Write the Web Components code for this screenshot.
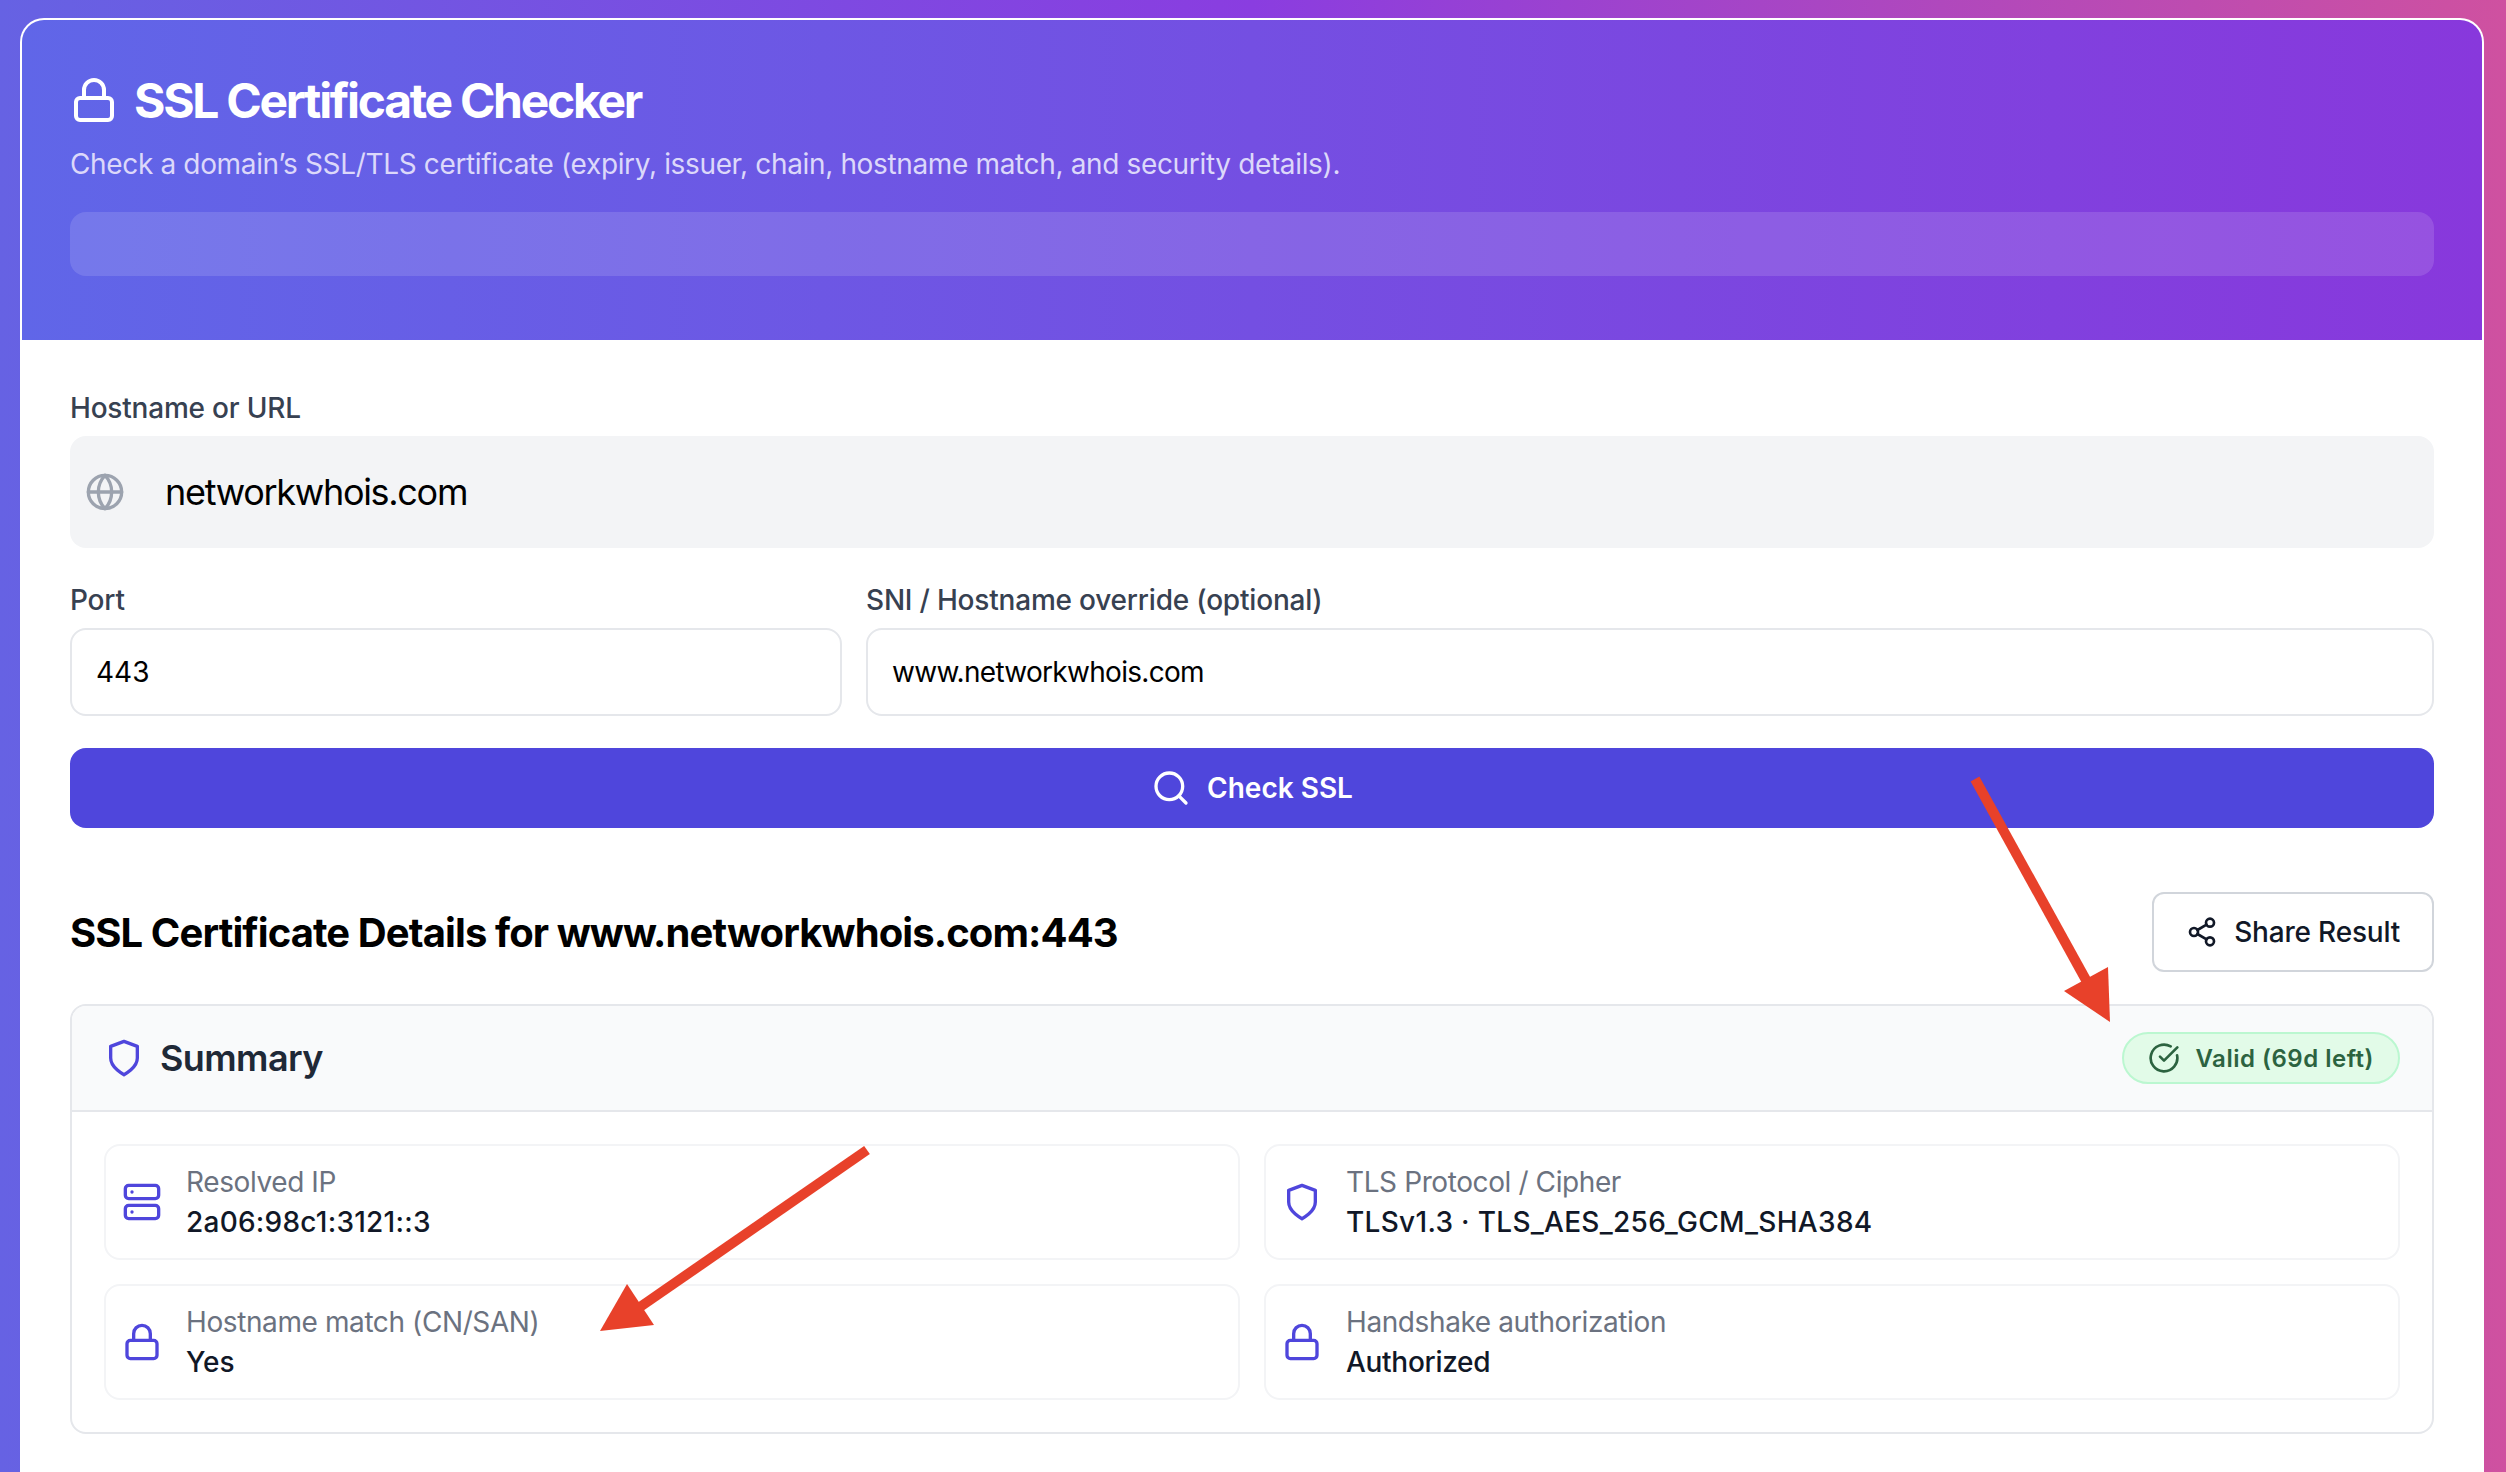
<!DOCTYPE html>
<html lang="en">
<head>
<meta charset="utf-8">
<title>SSL Certificate Checker</title>
<style>
    html, body { margin: 0; height: 100%; }
    body {
        position: relative;
        overflow: hidden;
        font-family: Inter, "Liberation Sans", sans-serif;
        background: linear-gradient(90deg, #6662e3 0%, #8a3de0 50%, #cf51a0 100%);
    }
</style>
</head>
<body>
<ssl-page>
    <ssl-header slot="header"
        heading="SSL Certificate Checker"
        subtitle="Check a domain’s SSL/TLS certificate (expiry, issuer, chain, hostname match, and security details)."></ssl-header>
    <form-field label="Hostname or URL">
        <text-box variant="large" icon="globe">networkwhois.com</text-box>
    </form-field>
    <field-row>
        <form-field label="Port"><text-box>443</text-box></form-field>
        <form-field label="SNI / Hostname override (optional)"><text-box style="letter-spacing: -0.7px">www.networkwhois.com</text-box></form-field>
    </field-row>
    <check-button icon="search">Check SSL</check-button>
    <result-heading>
        SSL Certificate Details for www.networkwhois.com:443
        <share-button slot="action" icon="share">Share Result</share-button>
    </result-heading>
    <summary-panel heading="Summary">
        <status-badge slot="status" icon="check">Valid (69d left)</status-badge>
        <info-tile icon="server" label="Resolved IP" style="--value-spacing: 0.25px">2a06:98c1:3121::3</info-tile>
        <info-tile icon="shield" label="TLS Protocol / Cipher" style="--value-spacing: 0.3px">TLSv1.3 · TLS_AES_256_GCM_SHA384</info-tile>
        <info-tile icon="lock" label="Hostname match (CN/SAN)">Yes</info-tile>
        <info-tile icon="lock" label="Handshake authorization" style="--value-spacing: -0.3px">Authorized</info-tile>
    </summary-panel>
</ssl-page>
<arrow-overlay></arrow-overlay>

<script>
const ICONS = {
    lock: '<rect x="3" y="11" width="18" height="11" rx="2"/><path d="M7 11V7a5 5 0 0 1 10 0v4"/>',
    globe: '<circle cx="12" cy="12" r="10"/><path d="M12 2a14.5 14.5 0 0 0 0 20 14.5 14.5 0 0 0 0-20"/><path d="M2 12h20"/>',
    search: '<circle cx="11" cy="11" r="8"/><path d="m21 21-4.3-4.3"/>',
    share: '<circle cx="18" cy="5" r="3"/><circle cx="6" cy="12" r="3"/><circle cx="18" cy="19" r="3"/><path d="m8.59 13.51 6.83 3.98"/><path d="m15.41 6.51-6.82 3.98"/>',
    shield: '<path d="M12 22s8-4 8-10V5l-8-3-8 3v7c0 6 8 10 8 10"/>',
    check: '<path d="M21.801 10A10 10 0 1 1 17 3.335"/><path d="m9 11 3 3L22 4"/>',
    server: '<rect x="2" y="2" width="20" height="8" rx="2"/><rect x="2" y="14" width="20" height="8" rx="2"/><path d="M6 6h.01"/><path d="M6 18h.01"/>'
};

class UiIcon extends HTMLElement {
    connectedCallback() {
        const size = this.getAttribute('size') || 40;
        this.attachShadow({ mode: 'open' });
        this.shadowRoot.innerHTML = `
            <style>
                :host { display: block; flex: none; width: ${size}px; height: ${size}px; }
                svg { display: block; width: 100%; height: 100%; }
            </style>
            <svg viewBox="0 0 24 24" fill="none" stroke="currentColor" stroke-width="2"
                stroke-linecap="round" stroke-linejoin="round">${ICONS[this.getAttribute('name')] || ''}</svg>
        `;
    }
}

class SslPage extends HTMLElement {
    connectedCallback() {
        this.attachShadow({ mode: 'open' });
        this.shadowRoot.innerHTML = `
            <style>
                :host { display: block; padding: 18px 22px 0 20px; height: 100%; box-sizing: border-box; }
                .card {
                    background: white;
                    border: 2px solid rgba(255, 255, 255, 0.85);
                    border-bottom: none;
                    border-radius: 24px 24px 0 0;
                    overflow: hidden;
                    height: 100%;
                    box-sizing: border-box;
                }
                .body {
                    display: flex;
                    flex-direction: column;
                    padding: 48px 48px 0;
                }
            </style>
            <div class="card">
                <slot name="header"></slot>
                <div class="body"><slot></slot></div>
            </div>
        `;
    }
}

class SslHeader extends HTMLElement {
    connectedCallback() {
        this.attachShadow({ mode: 'open' });
        this.shadowRoot.innerHTML = `
            <style>
                :host {
                    display: block;
                    height: 320px;
                    box-sizing: border-box;
                    padding: 48px 48px 0;
                    color: white;
                    background: linear-gradient(90deg, #6066e8, #8838dc);
                }
                .title { display: flex; align-items: center; gap: 16px; height: 64px; }
                h1 { margin: 0; font-size: 48px; line-height: 64px; font-weight: 700; letter-spacing: -2.3px; position: relative; top: 1px; }
                p { margin: 12px 0 0; font-size: 28px; line-height: 40px; letter-spacing: -0.35px; color: #dcd8fa; }
                .bar { margin-top: 28px; height: 64px; border-radius: 16px; background: rgba(255, 255, 255, 0.13); }
            </style>
            <div class="title">
                <ui-icon name="lock" size="48"></ui-icon>
                <h1>${this.getAttribute('heading')}</h1>
            </div>
            <p>${this.getAttribute('subtitle')}</p>
            <div class="bar"></div>
        `;
    }
}

class FormField extends HTMLElement {
    connectedCallback() {
        this.attachShadow({ mode: 'open' });
        this.shadowRoot.innerHTML = `
            <style>
                :host { display: block; min-width: 0; }
                label { display: block; margin-bottom: 8px; font-size: 28px; line-height: 40px; font-weight: 500; letter-spacing: -0.2px; color: #374151; }
            </style>
            <label>${this.getAttribute('label')}</label>
            <slot></slot>
        `;
    }
}

class FieldRow extends HTMLElement {
    connectedCallback() {
        this.attachShadow({ mode: 'open' });
        this.shadowRoot.innerHTML = `
            <style>
                :host { display: grid; grid-template-columns: 772px 1fr; gap: 24px; margin-top: 32px; }
            </style>
            <slot></slot>
        `;
    }
}

class TextBox extends HTMLElement {
    connectedCallback() {
        const large = this.getAttribute('variant') === 'large';
        const icon = this.getAttribute('icon');
        this.attachShadow({ mode: 'open' });
        this.shadowRoot.innerHTML = `
            <style>
                :host {
                    display: flex;
                    align-items: center;
                    box-sizing: border-box;
                    color: black;
                    height: ${large ? 112 : 88}px;
                    font-size: ${large ? 36 : 28}px;
                    ${large ? 'letter-spacing: -1.3px;' : ''}
                    padding-left: ${large ? 15 : 24}px;
                    gap: 40px;
                    border-radius: 16px;
                    background: ${large ? '#f3f4f6' : 'white'};
                    border: ${large ? 'none' : '2px solid #e5e7eb'};
                }
                ui-icon { color: #9ca3af; }
            </style>
            ${icon ? `<ui-icon name="${icon}"></ui-icon>` : ''}
            <slot></slot>
        `;
    }
}

class CheckButton extends HTMLElement {
    connectedCallback() {
        this.attachShadow({ mode: 'open' });
        this.shadowRoot.innerHTML = `
            <style>
                :host {
                    display: flex;
                    align-items: center;
                    justify-content: center;
                    gap: 16px;
                    height: 80px;
                    margin-top: 32px;
                    border-radius: 16px;
                    background: #4f46dc;
                    color: white;
                    font-size: 28px;
                    font-weight: 600;
                }
            </style>
            <ui-icon name="${this.getAttribute('icon')}"></ui-icon>
            <slot></slot>
        `;
    }
}

class ResultHeading extends HTMLElement {
    connectedCallback() {
        this.attachShadow({ mode: 'open' });
        this.shadowRoot.innerHTML = `
            <style>
                :host {
                    display: flex;
                    align-items: center;
                    justify-content: space-between;
                    margin-top: 64px;
                    color: black;
                    font-size: 40px;
                    font-weight: 700;
                    letter-spacing: -0.9px;
                }
            </style>
            <slot></slot>
            <slot name="action"></slot>
        `;
    }
}

class ShareButton extends HTMLElement {
    connectedCallback() {
        this.attachShadow({ mode: 'open' });
        this.shadowRoot.innerHTML = `
            <style>
                :host {
                    display: flex;
                    align-items: center;
                    gap: 16px;
                    box-sizing: border-box;
                    height: 80px;
                    padding: 0 32px;
                    border: 2px solid #d1d5db;
                    border-radius: 12px;
                    background: white;
                    color: #111827;
                    font-size: 28px;
                    font-weight: 500;
                    letter-spacing: -0.2px;
                }
            </style>
            <ui-icon name="${this.getAttribute('icon')}" size="32"></ui-icon>
            <slot></slot>
        `;
    }
}

class SummaryPanel extends HTMLElement {
    connectedCallback() {
        this.attachShadow({ mode: 'open' });
        this.shadowRoot.innerHTML = `
            <style>
                :host {
                    display: block;
                    margin-top: 32px;
                    border: 2px solid #e5e7eb;
                    border-radius: 16px;
                    overflow: hidden;
                }
                header {
                    display: flex;
                    align-items: center;
                    justify-content: space-between;
                    height: 106px;
                    box-sizing: border-box;
                    padding: 0 32px;
                    background: #f9fafb;
                    border-bottom: 2px solid #e5e7eb;
                }
                .name { display: flex; align-items: center; gap: 16px; color: #4f46dc; }
                h2 { margin: 0; font-size: 36px; font-weight: 600; letter-spacing: -0.6px; color: #1f2937; }
                .grid { display: grid; grid-template-columns: 1fr 1fr; gap: 24px; padding: 32px; }
            </style>
            <header>
                <div class="name">
                    <ui-icon name="shield"></ui-icon>
                    <h2>${this.getAttribute('heading')}</h2>
                </div>
                <slot name="status"></slot>
            </header>
            <div class="grid"><slot></slot></div>
        `;
    }
}

class StatusBadge extends HTMLElement {
    connectedCallback() {
        this.attachShadow({ mode: 'open' });
        this.shadowRoot.innerHTML = `
            <style>
                :host {
                    display: flex;
                    align-items: center;
                    gap: 16px;
                    height: 52px;
                    box-sizing: border-box;
                    padding: 0 24px;
                    border: 2px solid #bbf7d0;
                    border-radius: 26px;
                    background: #e2fbe8;
                    color: #2c6340;
                    font-size: 24px;
                    font-weight: 600;
                    letter-spacing: 0.5px;
                }
            </style>
            <ui-icon name="${this.getAttribute('icon')}" size="32"></ui-icon>
            <slot></slot>
        `;
    }
}

class InfoTile extends HTMLElement {
    connectedCallback() {
        this.attachShadow({ mode: 'open' });
        this.shadowRoot.innerHTML = `
            <style>
                :host {
                    display: flex;
                    align-items: center;
                    gap: 24px;
                    box-sizing: border-box;
                    height: 116px;
                    padding: 0 16px;
                    border: 2px solid #f3f4f6;
                    border-radius: 16px;
                }
                ui-icon { color: #4f46dc; }
                .label { font-size: 28px; line-height: 40px; letter-spacing: -0.4px; color: #6b7280; }
                .value { font-size: 28px; line-height: 40px; font-weight: 500; letter-spacing: var(--value-spacing, 0); color: #111827; }
            </style>
            <ui-icon name="${this.getAttribute('icon')}"></ui-icon>
            <div>
                <div class="label">${this.getAttribute('label')}</div>
                <div class="value"><slot></slot></div>
            </div>
        `;
    }
}

// red annotation arrows drawn on top of the screenshot
class ArrowOverlay extends HTMLElement {
    connectedCallback() {
        this.attachShadow({ mode: 'open' });
        this.shadowRoot.innerHTML = `
            <style>
                :host { position: absolute; inset: 0; pointer-events: none; }
                svg { display: block; width: 100%; height: 100%; }
            </style>
            <svg viewBox="0 0 2506 1472" fill="#e8412a" stroke="#e8412a">
                <line x1="1975" y1="779" x2="2086" y2="980" stroke-width="10"/>
                <polygon points="2110,1022 2108,967 2064,991" stroke="none"/>
                <line x1="867" y1="1150" x2="640" y2="1307" stroke-width="10"/>
                <polygon points="600,1331 627,1284 654,1325" stroke="none"/>
            </svg>
        `;
    }
}

customElements.define('ui-icon', UiIcon);
customElements.define('ssl-page', SslPage);
customElements.define('ssl-header', SslHeader);
customElements.define('form-field', FormField);
customElements.define('field-row', FieldRow);
customElements.define('text-box', TextBox);
customElements.define('check-button', CheckButton);
customElements.define('result-heading', ResultHeading);
customElements.define('share-button', ShareButton);
customElements.define('summary-panel', SummaryPanel);
customElements.define('status-badge', StatusBadge);
customElements.define('info-tile', InfoTile);
customElements.define('arrow-overlay', ArrowOverlay);
</script>
</body>
</html>
